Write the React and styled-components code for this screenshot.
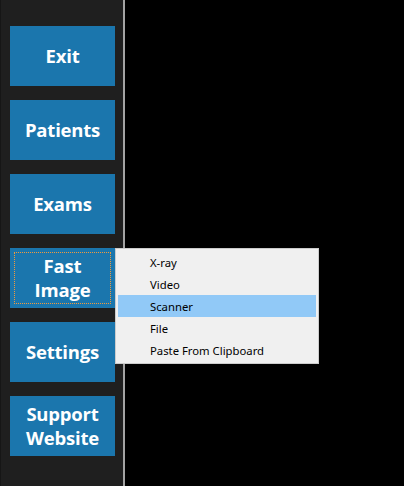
import React from 'react';
import styled, { createGlobalStyle } from 'styled-components';

const GlobalStyle = createGlobalStyle`
  html, body {
    margin: 0;
    padding: 0;
    background: #000;
  }
  #root {
    width: 404px;
    height: 486px;
    overflow: hidden;
  }
`;

const StyledWrapper = styled.div`
  position: relative;
  display: flex;
  width: 404px;
  height: 486px;
  background: #000;
`;

const StyledSidebar = styled.nav`
  box-sizing: border-box;
  width: 125px;
  height: 486px;
  padding: 26px 0 0 10px;
  display: flex;
  flex-direction: column;
  gap: 14px;
  background: #1f1f1f;
  border-left: 1px solid #161616;
  border-right: 2px solid #a3a3a3;
`;

const StyledButton = styled.button`
  position: relative;
  box-sizing: border-box;
  width: 105px;
  height: 60px;
  margin-left: -1px;
  padding: 0;
  border: none;
  background: #1b76ad;
  color: #fff;
  font-family: 'Open Sans', 'Noto Sans', sans-serif;
  font-weight: 700;
  font-size: 18.5px;
  letter-spacing: -0.2px;
  line-height: 24px;
  cursor: pointer;

  ${({ focused }) =>
    focused &&
    `
    &::after {
      content: '';
      position: absolute;
      inset: 4px;
      border: 1px dotted #f09a3c;
    }
  `}
`;

const StyledMenu = styled.ul`
  position: absolute;
  left: 115px;
  top: 248px;
  box-sizing: border-box;
  width: 204px;
  margin: 0;
  padding: 2px;
  list-style: none;
  background: #f0f0f0;
  border: 1px solid #cccccc;
`;

const StyledItem = styled.li`
  height: 22px;
  padding-left: 32px;
  display: flex;
  align-items: center;
  background: ${({ active }) => (active ? '#91c9f7' : 'transparent')};
  color: #000;
  font-family: 'Noto Sans', 'Open Sans', sans-serif;
  font-size: 11.3px;
`;

const buttons = [
  { label: 'Exit' },
  { label: 'Patients' },
  { label: 'Exams' },
  { label: ['Fast', 'Image'], focused: true },
  { label: 'Settings' },
  { label: ['Support', 'Website'] },
];

const menuItems = ['X-ray', 'Video', 'Scanner', 'File', 'Paste From Clipboard'];

const App = () => (
  <>
    <GlobalStyle />
    <StyledWrapper>
      <StyledSidebar>
        {buttons.map(({ label, focused }) => (
          <StyledButton key={[].concat(label).join(' ')} focused={focused}>
            {Array.isArray(label) ? (
              <>
                {label[0]}
                <br />
                {label[1]}
              </>
            ) : (
              label
            )}
          </StyledButton>
        ))}
      </StyledSidebar>
      <StyledMenu>
        {menuItems.map((item) => (
          <StyledItem key={item} active={item === 'Scanner'}>
            {item}
          </StyledItem>
        ))}
      </StyledMenu>
    </StyledWrapper>
  </>
);

export default App;
